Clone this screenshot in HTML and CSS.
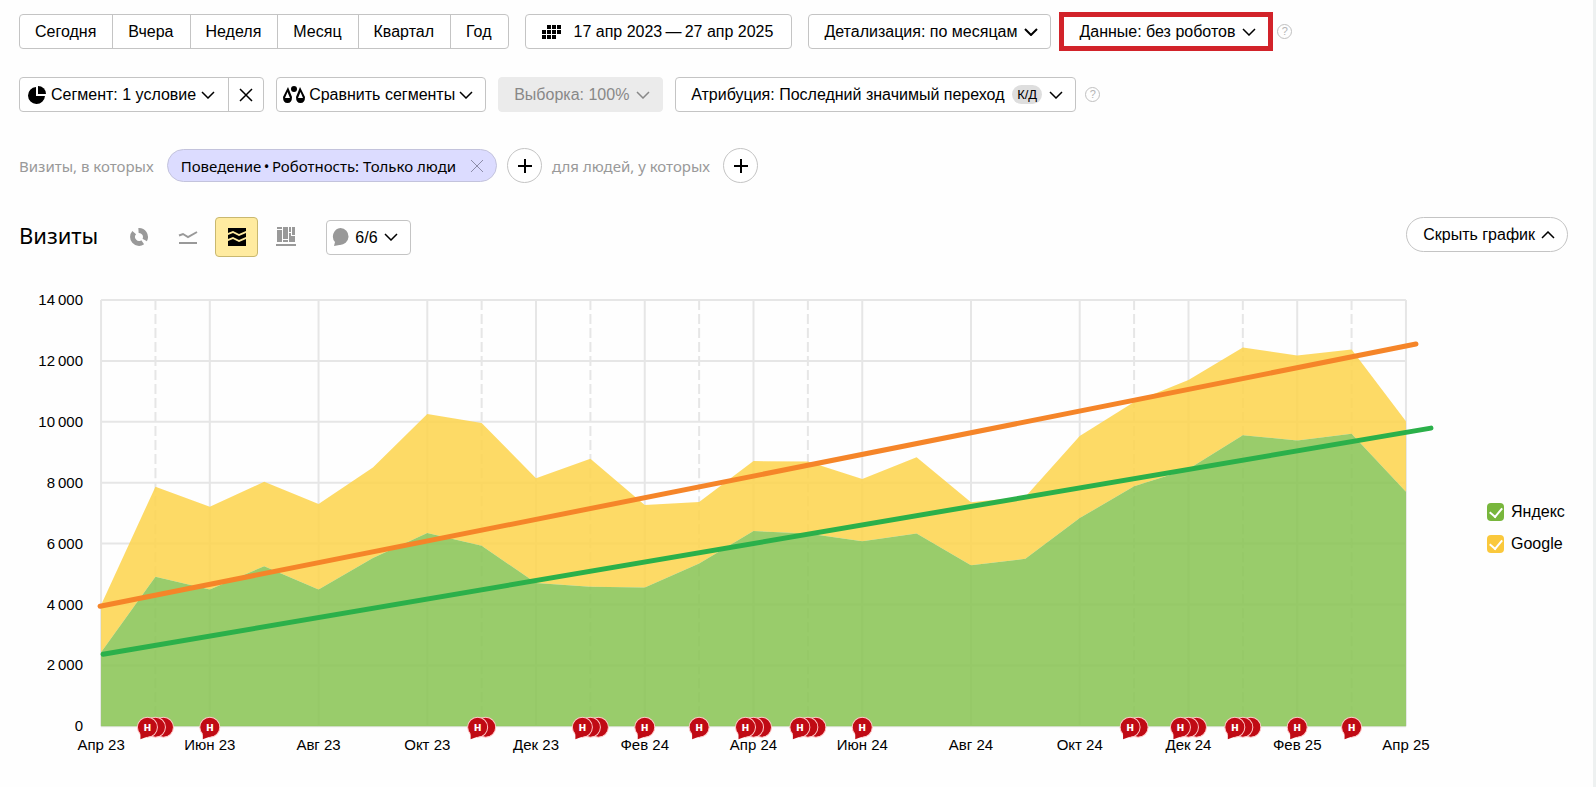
FILE: index.html
```
<!DOCTYPE html>
<html lang="ru">
<head>
  <meta charset="UTF-8" />
  <meta name="viewport" content="width=device-width, initial-scale=1" />
  <title>Визиты</title>
  <link rel="stylesheet" href="styles.css">
</head>
<body>
  <svg class="sprite" aria-hidden="true">
    <symbol id="down" viewBox="0 0 14 8"><path d="M1 1l6 6 6-6" /></symbol>
    <symbol id="up" viewBox="0 0 14 8"><path d="M1 7l6-6 6 6" /></symbol>
    <symbol id="cross" viewBox="0 0 14 14"><path d="M1 1l12 12M13 1L1 13" /></symbol>
    <symbol id="plus" viewBox="0 0 14 14"><path d="M7 0v14M0 7h14" /></symbol>
  </svg>

  <div class="page">
    <div class="toolbar">
      <div class="group">
        <button type="button">Сегодня</button>
        <button type="button">Вчера</button>
        <button type="button">Неделя</button>
        <button type="button">Месяц</button>
        <button type="button">Квартал</button>
        <button type="button">Год</button>
      </div>

      <button type="button" class="box dates">
        <svg class="icon-dates" viewBox="0 0 19 14"><path d="M5 0h4v4H5zM10 0h4v4h-4zM15 0h4v4h-4zM0 5h4v4H0zM5 5h4v4H5zM10 5h4v4h-4zM15 5h4v4h-4zM0 10h4v4H0zM5 10h4v4H5zM10 10h4v4h-4z" /></svg>
        17 апр 2023&#8201;—&#8201;27 апр 2025
      </button>

      <div class="box field">
        <select aria-label="Детализация"><option>Детализация: по месяцам</option></select>
        <svg class="chevron bold"><use href="#down" /></svg>
      </div>

      <div class="with-help">
        <div class="box field marked">
          <select aria-label="Данные"><option>Данные: без роботов</option></select>
          <svg class="chevron"><use href="#down" /></svg>
        </div>
        <button type="button" class="help">?</button>
      </div>
    </div>

    <div class="toolbar segments">
      <div class="group">
        <button type="button" class="segment">
          <svg class="icon-pie" viewBox="0 0 18 18"><path d="M8 1v9h9a8.500 8.500 0 1 1-9-9z" /><path d="M10 0a8 8 0 0 1 8 8h-8z" /></svg>
          Сегмент: 1 условие
          <svg class="chevron"><use href="#down" /></svg>
        </button>
        <button type="button" class="reset" aria-label="Сбросить"><svg class="cross"><use href="#cross" /></svg></button>
      </div>

      <button type="button" class="box compare">
        <svg class="icon-scales" viewBox="0 0 22 17"><circle cx="11" cy="3" r="3" /><path fill-rule="evenodd" d="M5 1l4 10q0 6-4.500 6T0 11zM4.500 6L2 12h5zM17 1l-4 10q0 6 4.500 6t4.500-6zM17.500 6L15 12h5z" /></svg>
        Сравнить сегменты
        <svg class="chevron"><use href="#down" /></svg>
      </button>

      <div class="box field disabled">
        <select aria-label="Выборка" disabled><option>Выборка: 100%</option></select>
        <svg class="chevron"><use href="#down" /></svg>
      </div>

      <div class="with-help wide">
        <div class="box field">
          <select aria-label="Атрибуция"><option>Атрибуция: Последний значимый переход</option></select>
          <span class="badge">К/Д</span>
          <svg class="chevron"><use href="#down" /></svg>
        </div>
        <button type="button" class="help">?</button>
      </div>
    </div>

    <div class="filters">
      <span class="scope">Визиты, в которых</span>
      <span class="tag">Поведение&#8201;•&#8201;Роботность: Только люди
        <button type="button" aria-label="Удалить"><svg class="cross"><use href="#cross" /></svg></button>
      </span>
      <button type="button" class="add" aria-label="Добавить условие"><svg class="cross"><use href="#plus" /></svg></button>
      <span class="scope">для людей, у которых</span>
      <button type="button" class="add" aria-label="Добавить условие"><svg class="cross"><use href="#plus" /></svg></button>
    </div>

    <div class="heading">
      <h1>Визиты</h1>
      <div class="views">
        <button type="button" aria-label="Круговая диаграмма">
          <svg viewBox="0 0 20 20"><path class="ring" d="M9.500 3.500A6.500 6.500 0 0 1 15.700 13M13.700 15.300A6.500 6.500 0 0 1 5.200 5.600" /></svg>
        </button>
        <button type="button" aria-label="Линии">
          <svg viewBox="0 0 20 20"><path class="line" d="M1 8.500l4-1.500 5 3 9-5" /><path d="M1 15h18v2H1z" /></svg>
        </button>
        <button type="button" class="active" aria-label="Области">
          <svg viewBox="0 0 20 20"><path d="M1 1h18v3l-7 3-6-3-5 2zM1 8l5-2 6 3 7-3v4l-7 3-6-3-5 2zM1 14l5-2 6 3 7-3v7H1z" /></svg>
        </button>
        <button type="button" aria-label="Столбцы">
          <svg viewBox="0 0 20 20"><path d="M1 0h5v2H1zM1 3h5v12H1zM7 0h5v12H7zM7 13h5v2H7zM13 0h2v5h-2zM16 0h3v8h-3zM13 6h2v3h4v6h-6zM0 17h20v2H0z" /></svg>
        </button>
      </div>
      <div class="box field notes">
        <svg class="icon-note" viewBox="0 0 17 18"><path d="M8.500 0a8.500 8.500 0 1 1-1 17L2 18l1-4A8.500 8.500 0 0 1 8.500 0z" /></svg>
        <select aria-label="Примечания"><option>6/6</option></select>
        <svg class="chevron"><use href="#down" /></svg>
      </div>
      <button type="button" class="box hide">Скрыть график <svg class="chevron"><use href="#up" /></svg></button>
    </div>

    <div class="report">
      <svg class="chart" id="chart" viewBox="0 0 1448 488" role="img" aria-label="Визиты"></svg>
      <div class="legend">
        <label><input type="checkbox" class="yandex" checked> Яндекс</label>
        <label><input type="checkbox" class="google" checked> Google</label>
      </div>
    </div>
  </div>

  <script>
    const yandex = [2430, 4910, 4495, 5260, 4495, 5525, 6345, 5930, 4705, 4580, 4560, 5350, 6410, 6335, 6080, 6335, 5285, 5500, 6840, 7880, 8450, 9560, 9390, 9610, 7705];
    const total = [3980, 7870, 7210, 8030, 7300, 8500, 10260, 9960, 8150, 8790, 7265, 7365, 8710, 8695, 8120, 8835, 7355, 7540, 9535, 10650, 11370, 12440, 12175, 12375, 10015];
    const months = ['Апр 23', 'Июн 23', 'Авг 23', 'Окт 23', 'Дек 23', 'Фев 24', 'Апр 24', 'Июн 24', 'Авг 24', 'Окт 24', 'Дек 24', 'Фев 25', 'Апр 25'];
    // month index -> number of notes
    const notes = { 1: 3, 2: 1, 7: 2, 9: 3, 10: 1, 11: 1, 12: 3, 13: 3, 14: 1, 19: 2, 20: 3, 21: 3, 22: 1, 23: 1 };

    const plot = { left: 82, top: 16, width: 1304, height: 426 };
    const max = 14000;
    const right = plot.left + plot.width;
    const bottom = plot.top + plot.height;
    const x = i => plot.left + plot.width * i / 24;
    const y = v => bottom - plot.height * v / max;
    const points = list => list.map((v, i) => x(i) + ',' + y(v));

    let out = '';

    for (let v = 0; v <= max; v += 2000) {
      out += `<line class="grid" x1="${plot.left}" x2="${right}" y1="${y(v)}" y2="${y(v)}" />`;
      const text = v ? v / 1000 + '\u2009000' : '0';
      out += `<text class="value" x="64" y="${y(v) + 5}">${text}</text>`;
    }
    for (let i = 0; i <= 24; i++) {
      if (i % 2 && !notes[i]) continue;
      out += `<line class="${i % 2 ? 'grid dashed' : 'grid'}" x1="${x(i)}" x2="${x(i)}" y1="${plot.top}" y2="${bottom}" />`;
    }

    out += `<polygon class="area-google" points="${points(total).concat(points(yandex).reverse()).join(' ')}" />`;
    out += `<polygon class="area-yandex" points="${x(0)},${bottom} ${points(yandex).join(' ')} ${x(24)},${bottom}" />`;

    out += '<line class="trend orange" x1="81" y1="322" x2="1396" y2="60" />';
    out += '<line class="trend green" x1="84" y1="370" x2="1411" y2="144" />';

    months.forEach((m, i) => {
      out += `<text class="month" x="${x(i * 2)}" y="466">${m}</text>`;
    });

    for (const i in notes) {
      const start = x(+i) - 4 * (notes[i] - 1);
      for (let n = notes[i] - 1; n >= 0; n--) {
        out += `<g class="note" transform="translate(${start + n * 8} ${bottom + 1})"><circle r="10" />`;
        if (!n) out += '<path d="M-7 5l0 7 8-3z" /><text y="4">н</text>';
        out += '</g>';
      }
    }

    document.getElementById('chart').innerHTML = out;
  </script>
</body>
</html>
```
FILE: styles.css
```
* { box-sizing: border-box; }
body { margin: 0; font-family: "Liberation Sans", Arial, sans-serif; font-size: 16px; color: #000; background: #fefefe; }
button, select { font: inherit; color: inherit; background: none; border: none; padding: 0; margin: 0; cursor: pointer; }
select { appearance: none; opacity: 1; }
.sprite { display: none; }
.page { min-height: 100vh; padding: 12px 25px 12px 19px; border-right: 3px solid #eef1f1; }

.toolbar { display: flex; flex-wrap: wrap; align-items: center; gap: 16px; }
.segments { gap: 12px; margin-top: 26px; }
.group, .box { display: flex; align-items: center; height: 35px; border: 1px solid #c4c4c4; border-radius: 4px; background: #fff; }
.group button { height: 33px; padding: 0 16px 0 15px; }
.group button + button { border-left: 1px solid #c4c4c4; }
.box { padding: 0 16px; gap: 6px; }
.box.field { padding: 0 12px 0 15px; }
.box.dates { gap: 13px; padding: 0 18px 0 16px; }
.box.marked { height: 39px; border: 5px solid #d2232a; border-radius: 0; }
.box.disabled { color: #888; background: #ebebeb; border-color: #ebebeb; }
.box.disabled select { cursor: default; }
.with-help { display: flex; align-items: center; gap: 4px; margin-left: -8px; }
.with-help.wide { gap: 9px; margin-left: 0; }
.with-help.wide .box { gap: 7px; }
.help { width: 15px; height: 15px; border: 1px solid #c0c0c0; border-radius: 50%; font-size: 11px; line-height: 13px; color: #b4b4b4; }
.badge { padding: 0 5px; border-radius: 10px; background: #dedede; font-size: 13px; line-height: 19px; }

svg { flex: none; }
.chevron { width: 14px; height: 8px; fill: none; stroke: currentColor; stroke-width: 1.5; }
.chevron.bold { stroke-width: 2; }
.cross { display: block; width: 14px; height: 14px; fill: none; stroke: currentColor; stroke-width: 1.5; }
.icon-dates { width: 19px; height: 14px; }
.icon-pie { width: 18px; height: 18px; }
.icon-scales { width: 22px; height: 17px; }
.icon-note { width: 17px; height: 18px; fill: #999; }
.group .segment { display: flex; align-items: center; gap: 5px; padding: 0 13px 0 8px; }
.group .reset { padding: 0 10px; }
.box.compare { padding: 0 12px 0 6px; gap: 4px; }

.filters { display: flex; align-items: center; gap: 10px; margin-top: 36px; font-family: "Noto Sans", sans-serif; font-size: 15px; color: #999; }
.scope { margin-right: 3px; }
.tag { display: flex; align-items: center; gap: 14px; height: 33px; padding: 0 12px 0 13px; border: 1px solid #c3c3dc; border-radius: 17px; background: #dcdcff; color: #000; }
.tag .cross { stroke: #8c8ca8; stroke-width: 1; }
.add { display: flex; align-items: center; justify-content: center; width: 35px; height: 35px; border: 1px solid #c4c4c4; border-radius: 50%; background: #fff; color: #000; }
.add .cross { stroke-width: 2; }

.heading { display: flex; align-items: center; margin-top: 34px; }
h1 { margin: 0; padding-bottom: 4px; font-family: "Noto Sans", sans-serif; font-size: 22px; line-height: 24px; font-weight: normal; }
.views { display: flex; gap: 6px; margin: 0 19px; }
.views button { display: flex; align-items: center; justify-content: center; width: 43px; height: 40px; border: 1px solid transparent; border-radius: 4px; color: #999; }
.views .active { color: #000; background: #ffeba0; border-color: #c9b86f; }
.views svg { width: 20px; height: 20px; fill: currentColor; }
.views .line { fill: none; stroke: currentColor; stroke-width: 2; }
.views .ring { fill: none; stroke: currentColor; stroke-width: 5; }
.box.notes { padding: 0 12px 0 5px; gap: 6px; }
.box.hide { align-self: flex-start; margin-left: auto; padding: 0 12px 0 16px; border-radius: 18px; }

.report { display: flex; align-items: center; gap: 19px; margin-top: 27px; }
.chart { flex: 1; min-width: 0; height: auto; font-size: 15px; }
.grid { stroke: #e6e6e6; stroke-width: 2; }
.dashed { stroke-dasharray: 10 4; }
.value { text-anchor: end; }
.month { text-anchor: middle; }
.area-google { fill: #fdd34b; fill-opacity: 0.85; }
.area-yandex { fill: #87c351; fill-opacity: 0.85; }
.trend { stroke-width: 5; stroke-linecap: round; }
.orange { stroke: #f58529; }
.green { stroke: #2bb04a; }
.note { fill: #c00a14; }
.note circle { stroke: #ffc8c8; stroke-width: 1; }
.note text { fill: #fff; font-size: 13px; font-weight: bold; text-anchor: middle; }

.legend { display: flex; flex-direction: column; gap: 13px; flex: 0 0 81px; }
.legend label { display: flex; align-items: center; gap: 7px; height: 19px; }
.legend input { appearance: none; display: grid; place-items: center; width: 17px; height: 18px; margin: 0; border-radius: 4px; }
.legend input:checked::before { content: ""; width: 6px; height: 10px; margin-bottom: 3px; border: solid #fff; border-width: 0 2px 2px 0; transform: rotate(40deg); }
.yandex { background: #78b63c; }
.google { background: #fac83c; }
```
